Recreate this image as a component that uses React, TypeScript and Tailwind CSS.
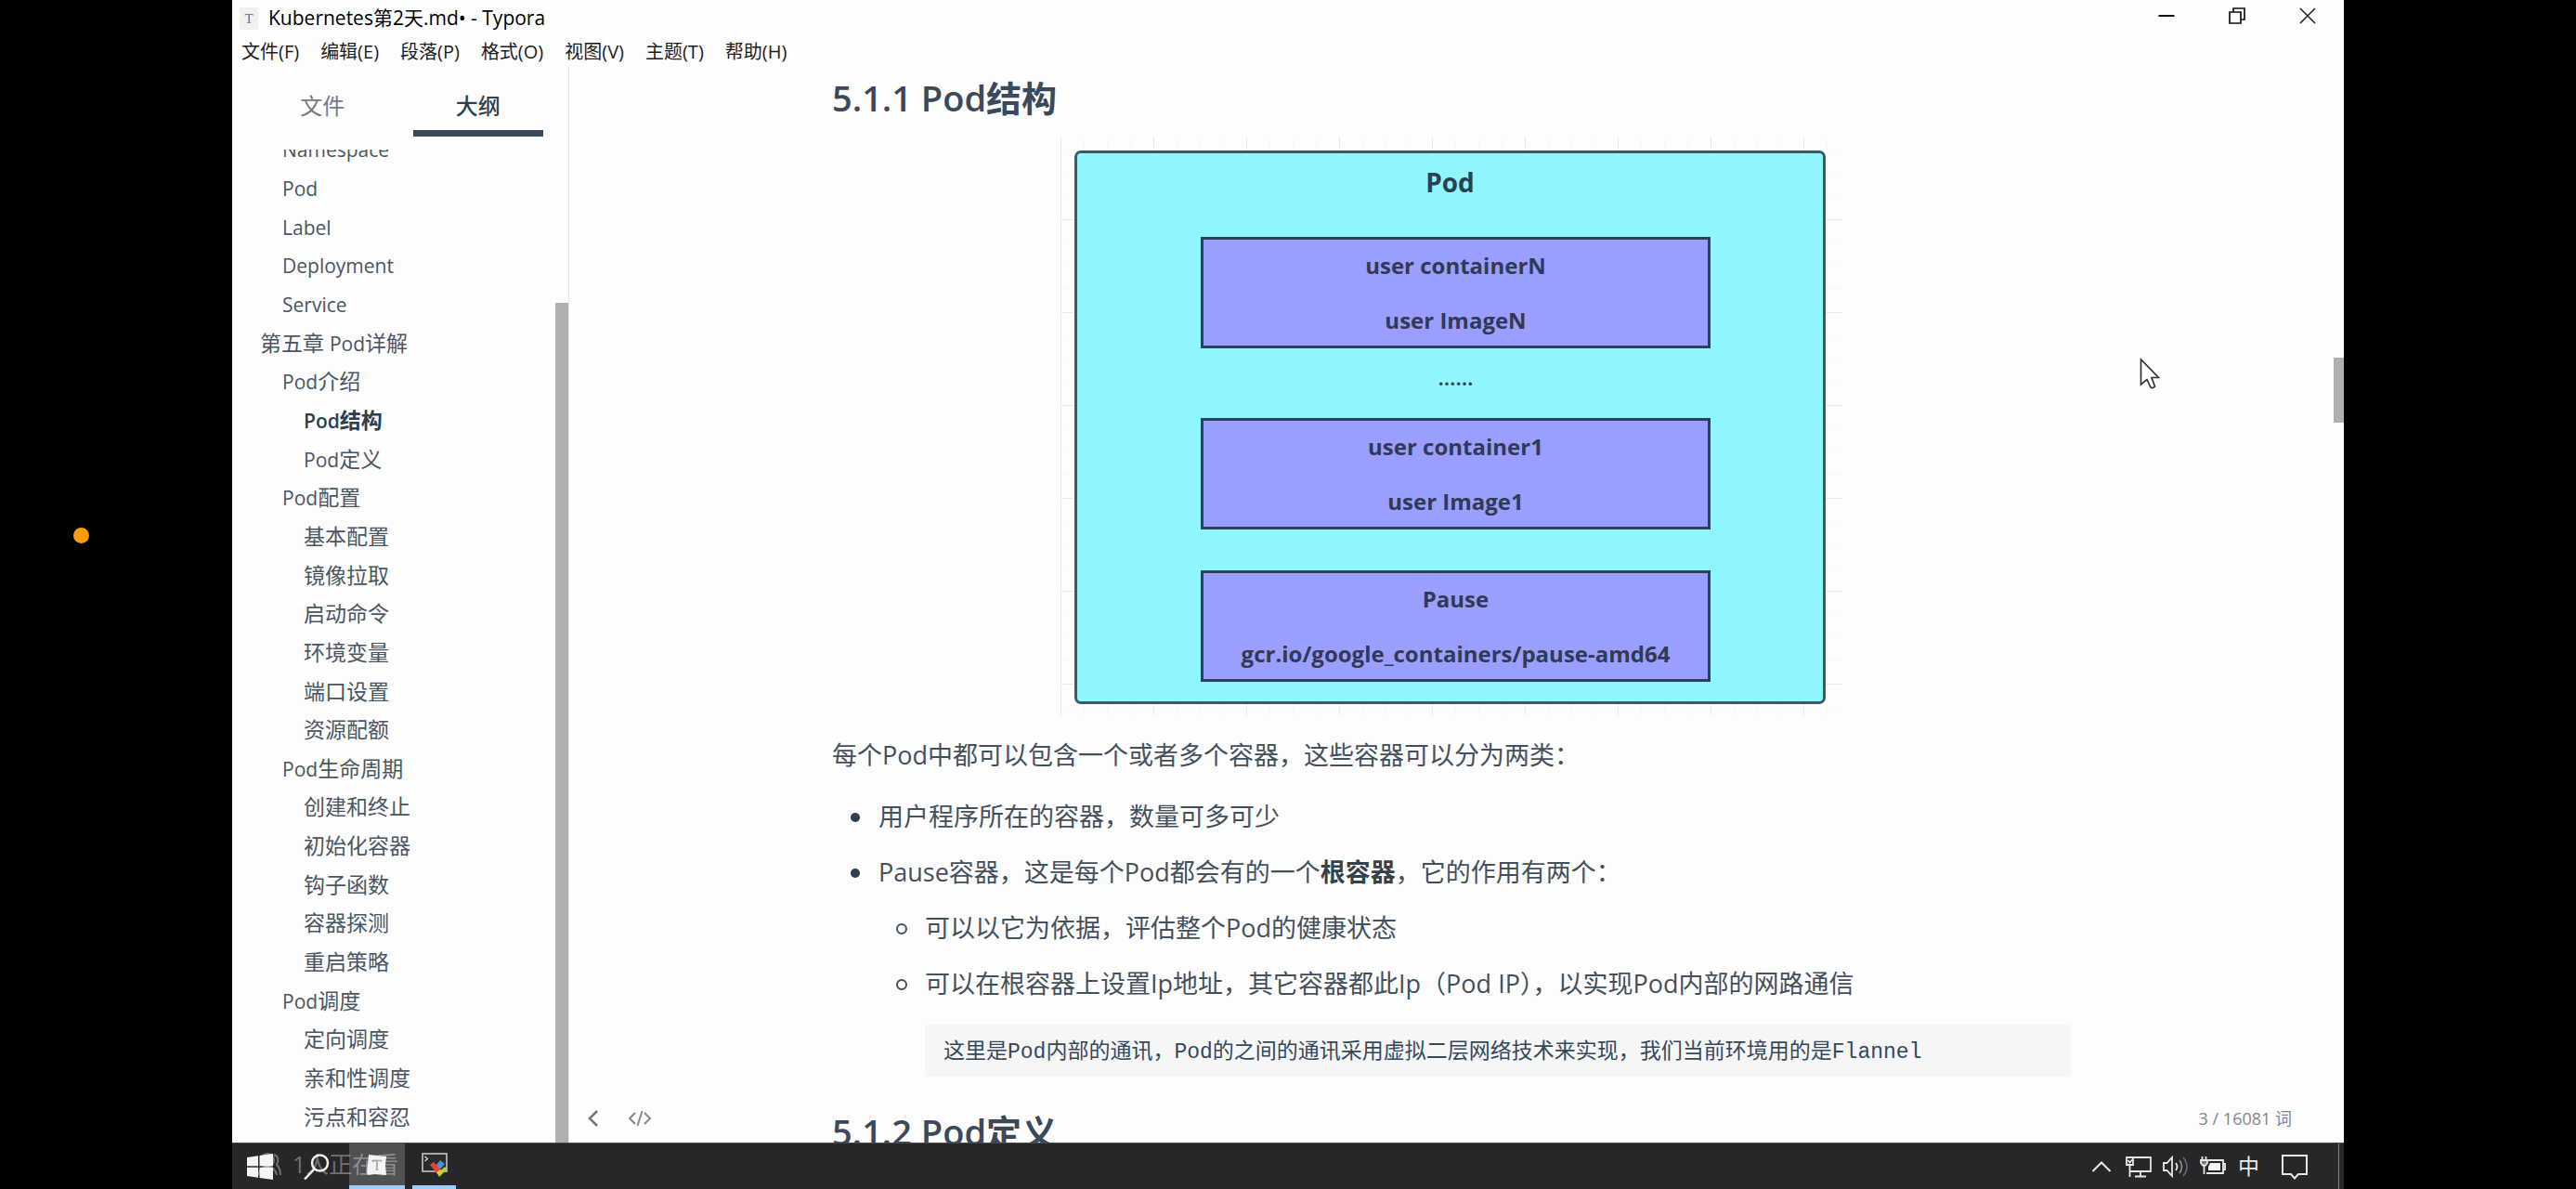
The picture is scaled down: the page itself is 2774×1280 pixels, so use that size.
import React from "react";

const outline: { text: string; level: 1 | 2 | 3; active?: boolean }[] = [
  { text: "Namespace", level: 2 },
  { text: "Pod", level: 2 },
  { text: "Label", level: 2 },
  { text: "Deployment", level: 2 },
  { text: "Service", level: 2 },
  { text: "第五章 Pod详解", level: 1 },
  { text: "Pod介绍", level: 2 },
  { text: "Pod结构", level: 3, active: true },
  { text: "Pod定义", level: 3 },
  { text: "Pod配置", level: 2 },
  { text: "基本配置", level: 3 },
  { text: "镜像拉取", level: 3 },
  { text: "启动命令", level: 3 },
  { text: "环境变量", level: 3 },
  { text: "端口设置", level: 3 },
  { text: "资源配额", level: 3 },
  { text: "Pod生命周期", level: 2 },
  { text: "创建和终止", level: 3 },
  { text: "初始化容器", level: 3 },
  { text: "钩子函数", level: 3 },
  { text: "容器探测", level: 3 },
  { text: "重启策略", level: 3 },
  { text: "Pod调度", level: 2 },
  { text: "定向调度", level: 3 },
  { text: "亲和性调度", level: 3 },
  { text: "污点和容忍", level: 3 },
];

const menus = ["文件(F)", "编辑(E)", "段落(P)", "格式(O)", "视图(V)", "主题(T)", "帮助(H)"];

const indent = { 1: "pl-[30px]", 2: "pl-[54px]", 3: "pl-[77px]" };

/* Latin runs are set a little smaller than the Chinese around them. */
function Label({ text }: { text: string }) {
  return (
    <>
      {text.split(/([A-Za-z]+)/).map((part, i) =>
        /^[A-Za-z]+$/.test(part) ? (
          <span key={i} className="text-[21px]">
            {part}
          </span>
        ) : (
          part
        ),
      )}
    </>
  );
}

function TitleBar() {
  return (
    <header className="flex h-[40px] shrink-0 items-center pl-2 text-black">
      <span className="mr-[11px] flex h-6 w-[20px] items-center justify-center bg-[#f1f1f1] font-['Liberation_Serif',serif] text-[15px] text-gray-500">
        T
      </span>
      <h1 className="text-[21px]">Kubernetes第2天.md• - Typora</h1>
      <div className="ml-auto flex h-[34px] self-start pr-px">
        <button aria-label="最小化" className="flex w-[76px] items-center justify-center">
          <svg width="18" height="18" viewBox="0 0 18 18" stroke="#111" strokeWidth="2">
            <path d="M0.500 9H17.500" />
          </svg>
        </button>
        <button aria-label="还原" className="flex w-[76px] items-center justify-center">
          <svg width="18" height="18" viewBox="0 0 18 18" fill="none" stroke="#111" strokeWidth="1.700">
            <path d="M1 5H13V17H1ZM5 5V1H17V13H13" />
          </svg>
        </button>
        <button aria-label="关闭" className="flex w-[76px] items-center justify-center">
          <svg width="18" height="18" viewBox="0 0 18 18" fill="none" stroke="#222" strokeWidth="1.600">
            <path d="M1 1L17 17M17 1L1 17" />
          </svg>
        </button>
      </div>
    </header>
  );
}

function Sidebar() {
  return (
    <aside className="flex w-[363px] shrink-0 flex-col border-r border-[#e4e4e6]">
      <div role="tablist" className="flex h-[75px] shrink-0 gap-[27px] px-[27px] text-[24px]">
        <button role="tab" aria-selected="false" className="flex-1 border-b-[7px] border-transparent pt-4 text-[#777b85]">
          文件
        </button>
        <button role="tab" aria-selected="true" className="flex-1 border-b-[7px] border-[#384a59] pt-4 font-medium text-[#2e3f50]">
          大纲
        </button>
      </div>
      <div className="mt-[14px] flex min-h-0 flex-1">
        <nav aria-label="大纲" className="flex min-w-0 flex-1 flex-col overflow-hidden">
          <ul className="-mt-[21px] flex min-h-0 flex-1 flex-col pb-[7px] text-[23px] text-[#4a5663]">
            {outline.map((item) => (
              <li key={item.text} className="flex min-h-0 flex-1 items-center">
                <a
                  href="#outline"
                  className={`${indent[item.level]} whitespace-nowrap leading-none ${item.active ? "font-semibold text-[#2c3e50]" : ""}`}
                >
                  <Label text={item.text} />
                </a>
              </li>
            ))}
          </ul>
        </nav>
        <div className="flex w-[14px] shrink-0 flex-col">
          <div className="flex-[165]" />
          <div className="flex-[905] bg-[#b0b0b0]" />
        </div>
      </div>
    </aside>
  );
}

function Box({ lines, className }: { lines: [string, string]; className: string }) {
  return (
    <div
      className={`${className} ml-[133px] mr-[121px] flex h-[120px] flex-col justify-center border-[3px] border-[#2c4058] bg-[#999eff] text-center text-[24px] leading-[59px]`}
    >
      <p>{lines[0]}</p>
      <p>{lines[1]}</p>
    </div>
  );
}

function PodDiagram() {
  return (
    <figure className="mx-auto mt-5 w-[842px] bg-[linear-gradient(to_right,#e9e9ec_1px,transparent_1px),linear-gradient(to_bottom,#e9e9ec_1px,transparent_1px),linear-gradient(to_right,#f8f8f9_1px,transparent_1px),linear-gradient(to_bottom,#f8f8f9_1px,transparent_1px)] bg-[size:100px_100px,100px_100px,25px_25px,25px_25px] bg-[position:0_89px,0_89px,0_14px,0_14px] px-[15px] pb-[12px] pt-[15px]">
      <div className="h-[596px] w-[809px] rounded-[7px] border-[3px] border-[#3d5a62] bg-[#8ff5ff] font-['Open_Sans','Noto_Sans_CJK_SC',sans-serif] font-bold text-[#303a55]">
        <p className="pt-[11px] text-center text-[28px] leading-[40px] text-[#2a4250]">Pod</p>
        <Box className="mt-[39px]" lines={["user containerN", "user ImageN"]} />
        <p className="ml-[133px] mr-[121px] text-center font-['Noto_Sans_CJK_SC',sans-serif] text-[19px] font-black leading-[75px] text-[#2a4250]">……</p>
        <Box className="" lines={["user container1", "user Image1"]} />
        <Box className="mt-[44px]" lines={["Pause", "gcr.io/google_containers/pause-amd64"]} />
      </div>
    </figure>
  );
}

function Article() {
  return (
    <main className="flex min-h-0 min-w-0 flex-1">
      <div className="flex min-w-0 flex-1 flex-col">
        <article className="mx-auto min-h-0 w-[1334px] flex-1 pt-[11px] text-[27px] leading-[40px] text-[#43505e]">
          <h2 className="text-[38px] font-semibold leading-[44px] text-[#3a495c]">5.1.1 Pod结构</h2>
          <PodDiagram />
          <p className="mt-[23px]">每个Pod中都可以包含一个或者多个容器，这些容器可以分为两类：</p>
          <ul className="mt-[26px] flex flex-col gap-5 pl-5">
            <li className="flex">
              <span className="mr-5 mt-[16px] size-[10px] rounded-full bg-[#2c3e50]" />
              <p>用户程序所在的容器，数量可多可少</p>
            </li>
            <li className="flex">
              <span className="mr-5 mt-[16px] size-[10px] shrink-0 rounded-full bg-[#2c3e50]" />
              <div className="flex-1">
                <p>
                  Pause容器，这是每个Pod都会有的一个<strong className="font-bold text-[#34414f]">根容器</strong>，它的作用有两个：
                </p>
                <ul className="mt-5 flex flex-col gap-5 pl-[19px]">
                  <li className="flex">
                    <span className="mr-[19px] mt-[15px] size-[12px] rounded-full border-2 border-[#43505e]" />
                    <p>可以以它为依据，评估整个Pod的健康状态</p>
                  </li>
                  <li className="flex">
                    <span className="mr-[19px] mt-[15px] size-[12px] shrink-0 rounded-full border-2 border-[#43505e]" />
                    <div className="flex-1">
                      <p className="whitespace-nowrap">可以在根容器上设置Ip地址，其它容器都此Ip（Pod IP），以实现Pod内部的网路通信</p>
                      <pre className="mt-[24px] bg-[#f6f6f6] pl-5 pt-1 font-['Liberation_Mono','Noto_Sans_CJK_SC',monospace] text-[23px] leading-[52px] text-[#34495e]">
                        <code className="font-['Liberation_Mono','Noto_Sans_CJK_SC',monospace]">这里是Pod内部的通讯，Pod的之间的通讯采用虚拟二层网络技术来实现，我们当前环境用的是Flannel</code>
                      </pre>
                    </div>
                  </li>
                </ul>
              </div>
            </li>
          </ul>
          <h2 className="mt-[37px] text-[38px] font-semibold leading-[44px] text-[#3a495c]">5.1.2 Pod定义</h2>
        </article>
      </div>
      <div className="flex w-[11px] shrink-0 flex-col">
        <div className="flex-[313]" />
        <div className="flex-[70] bg-[#b0b0b0]" />
        <div className="flex-[775]" />
      </div>
    </main>
  );
}

function StatusBar() {
  return (
    <footer className="absolute bottom-0 left-[364px] right-0 flex h-[52px] items-center pl-[18px] pr-[56px] text-[#80868c]">
      <button aria-label="隐藏侧边栏">
        <svg width="14" height="20" viewBox="0 0 14 20" fill="none" stroke="#777" strokeWidth="2.500">
          <path d="M11 2L3 10L11 18" />
        </svg>
      </button>
      <button aria-label="源代码模式" className="ml-[30px]">
        <svg width="26" height="20" viewBox="0 0 26 20" fill="none" stroke="#888" strokeWidth="2">
          <path d="M8 4L2 10L8 16M18 4L24 10L18 16M15.500 2L10.500 18" />
        </svg>
      </button>
      <button className="ml-auto text-[18px]">3 / 16081 词</button>
    </footer>
  );
}

function Taskbar() {
  return (
    <footer className="relative flex h-[50px] shrink-0 border-t border-[#4a4a4d] bg-[#27272a]">
      <button aria-label="开始" className="flex w-[59px] items-center justify-end pr-[15px]">
        <svg width="28" height="28" viewBox="0 0 28 28" fill="#f5f5f5">
          <path d="M0 4L12 2.300V13.300H0ZM13.500 2.100L28 0V13.300H13.500ZM0 14.700H12V25.700L0 24ZM13.500 14.700H28V28L13.500 25.900Z" />
        </svg>
      </button>
      <button aria-label="搜索" className="flex w-[67px] items-center justify-center pr-1">
        <svg width="28" height="28" viewBox="0 0 28 28" fill="none" stroke="#f0f0f0" strokeWidth="2.500">
          <circle cx="17.500" cy="10" r="8.500" />
          <path d="M11.500 16.500L1 27.500" />
        </svg>
      </button>
      <button aria-label="Typora" className="flex w-[60px] items-center justify-center border-b-[4px] border-[#9fcdf3] bg-[#515154]">
        <svg width="24" height="26" viewBox="0 0 24 26">
          <path d="M3 2L22 4L21 13L22 24L8 23L2 24L1 21L2 12Z" fill="#f2f2f2" />
          <path d="M7.500 10V8.500H16.500V10M12 8.500V18M10.500 18H13.500" fill="none" stroke="#999" strokeWidth="1.500" />
        </svg>
      </button>
      <button aria-label="终端" className="ml-2 flex w-[47px] items-center justify-center border-b-[4px] border-[#9fcdf3]">
        <svg width="28" height="28" viewBox="0 0 28 28">
          <path d="M1 2H27V21H1Z" fill="#2b2b2e" stroke="#d0d0d0" strokeWidth="1.500" />
          <path d="M3.500 5L6.500 7.500L3.500 10" fill="none" stroke="#ddd" strokeWidth="1.200" />
          <path d="M20 9L25 13L19 20L15 15Z" fill="#4d8fe0" />
          <path d="M9 14L13 11L21 20L17 24Z" fill="#e5452f" />
          <path d="M17 23L25 16L27 19L19 27Z" fill="#a8d92b" />
          <path d="M16 22L20 19L22 22L19 26Z" fill="#f2c232" />
        </svg>
      </button>
      <div className="ml-auto flex items-center">
        <button aria-label="显示隐藏的图标">
          <svg width="22" height="14" viewBox="0 0 22 14" fill="none" stroke="#e8e8e8" strokeWidth="2">
            <path d="M1.500 12L11 2.500L20.500 12" />
          </svg>
        </button>
        <button aria-label="网络" className="ml-[15px]">
          <svg width="28" height="24" viewBox="0 0 28 24" fill="none" stroke="#e8e8e8" strokeWidth="1.800">
            <path d="M9 2H27V17H5M16 17V22M10 22.500H22M4.500 11V23M1 2H8V10H1ZM2.500 5L4.500 7.500L7 4.500" />
          </svg>
        </button>
        <button aria-label="音量" className="ml-[12px]">
          <svg width="28" height="24" viewBox="0 0 28 24" fill="none" stroke="#e8e8e8" strokeWidth="1.800">
            <path d="M1 8H4.500L10 2V22L4.500 16H1Z" />
            <path d="M14 8Q17 12 14 16" />
            <path d="M18 5Q23 12 18 19" stroke="#8a8a8c" />
            <path d="M22 2Q30 12 22 22" stroke="#66666a" />
          </svg>
        </button>
        <button aria-label="电池" className="ml-[12px]">
          <svg width="28" height="24" viewBox="0 0 28 24" fill="none" stroke="#e8e8e8" strokeWidth="1.800">
            <path d="M9 5H25V19H7M25 9H27V15H25" />
            <path d="M11 8H22V16H9V12Z" fill="#f4f4f4" stroke="none" />
            <path d="M2.500 1V5M6.500 1V5M4.500 10V20" />
            <path d="M1 5H8V8L6 10.500H3L1 8Z" fill="#777" />
          </svg>
        </button>
        <button aria-label="输入法" className="ml-[13px] text-[23px] leading-none text-[#ececec]">
          中
        </button>
        <button aria-label="通知" className="ml-[24px]">
          <svg width="28" height="28" viewBox="0 0 28 28" fill="none" stroke="#e8e8e8" strokeWidth="2">
            <path d="M1 2H27V22H18L14 26.500L10 22H1Z" />
          </svg>
        </button>
        <button aria-label="显示桌面" className="ml-[33px] h-full w-[6px] border-l border-[#88888b]" />
      </div>
      <div className="pointer-events-none absolute left-[27px] top-[4px] flex items-center text-[25px] leading-[36px] text-white/35">
        <svg width="26" height="26" viewBox="0 0 26 26" fill="none" stroke="currentColor" strokeWidth="2">
          <circle cx="11" cy="9" r="7" />
          <path d="M1 25Q3 16 11 16Q19 16 21 25M18 3Q25 6 21 14Q25 18 25 25" />
        </svg>
        <span className="ml-3">1人正在看</span>
      </div>
    </footer>
  );
}

export default function App() {
  return (
    <div className="relative flex h-screen bg-black px-[250px] font-['Open_Sans','Noto_Sans_CJK_SC',sans-serif]">
      <span className="absolute left-[79px] top-[568px] size-[17px] rounded-full bg-[#ff9a0c]" />
      <div className="relative flex min-w-0 flex-1 flex-col overflow-hidden bg-[#fdfdfd]">
        <TitleBar />
        <nav aria-label="菜单" className="flex h-8 shrink-0 items-center gap-[23px] pl-[10px] text-[20px] text-[#1c1c1c]">
          {menus.map((m) => (
            <button key={m}>{m}</button>
          ))}
        </nav>
        <div className="relative flex min-h-0 flex-1 overflow-hidden">
          <Sidebar />
          <Article />
          <StatusBar />
        </div>
        <Taskbar />
        <svg className="pointer-events-none absolute right-[198px] top-[385px]" width="22" height="34" viewBox="0 0 22 34">
          <path d="M1.500 2V29L8 23.500L12 32Q14 33.500 16.500 31L13 21.500H20.500Z" fill="#fff" stroke="#333" strokeWidth="1.700" />
        </svg>
      </div>
    </div>
  );
}
